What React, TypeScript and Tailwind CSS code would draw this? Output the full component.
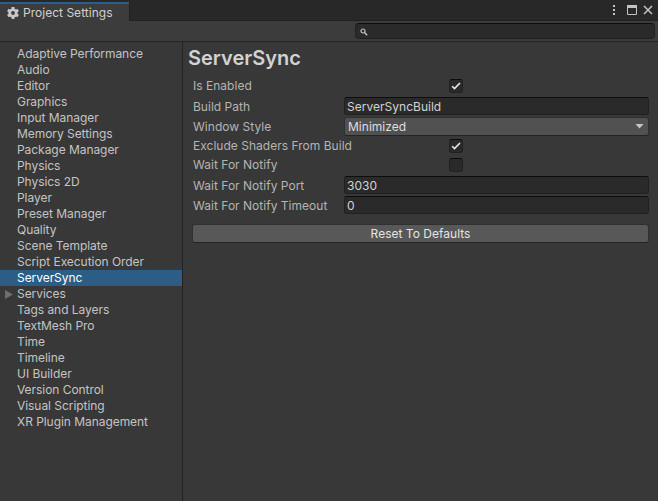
import React from "react";

const sections = [
  "Adaptive Performance", "Audio", "Editor", "Graphics", "Input Manager", "Memory Settings",
  "Package Manager", "Physics", "Physics 2D", "Player", "Preset Manager", "Quality",
  "Scene Template", "Script Execution Order", "ServerSync", "Services", "Tags and Layers",
  "TextMesh Pro", "Time", "Timeline", "UI Builder", "Version Control", "Visual Scripting",
  "XR Plugin Management",
];

function Gear() {
  return (
    <svg width="12" height="12" viewBox="0 0 12 12" className="shrink-0">
      <g fill="#c8c8c8">
        {[0, 60, 120].map((a) => (
          <rect key={a} x="4.5" y="0" width="3" height="12" rx="0.4" transform={`rotate(${a} 6 6)`} />
        ))}
        <circle cx="6" cy="6" r="4.6" />
      </g>
      <circle cx="6" cy="6" r="1.9" fill="#3c3c3c" />
    </svg>
  );
}

function Checkbox({ checked }: { checked?: boolean }) {
  return (
    <div className="ml-[105px] h-[14px] w-[14px] rounded-[3px] border border-[#212121] border-t-[#0d0d0d] bg-[#2a2a2a]">
      {checked && (
        <svg width="12" height="12" viewBox="0 0 12 12" className="block">
          <path d="M2.2 6.2 L4.5 8.6 L10 3" fill="none" stroke="#e8e8e8" strokeWidth="1.6" />
        </svg>
      )}
    </div>
  );
}

function TextField({ value }: { value: string }) {
  return (
    <div className="flex h-[18px] flex-1 items-center rounded-[3px] border border-[#212121] border-t-[#0d0d0d] bg-[#2a2a2a] pt-[2px] pl-[2px] text-[#d2d2d2]">
      {value}
    </div>
  );
}

function Row({ label, className, low, children }: { label: string; className: string; low?: boolean; children: React.ReactNode }) {
  return (
    <div className={`flex items-center ${className}`}>
      <div className={`w-[151px] shrink-0 whitespace-nowrap text-[#b4b4b4] ${low ? "pt-[2px]" : ""}`}>{label}</div>
      {children}
    </div>
  );
}

export default function App() {
  return (
    <div className="flex h-[501px] w-[658px] flex-col overflow-hidden bg-[#383838] font-[Inter,sans-serif] text-[12px] leading-[16px] tracking-[0.02px] text-[#c4c4c4]">
      <div className="flex h-[21px] shrink-0 bg-[#282828] pt-[2px]">
        <div className="flex w-[129px] items-center gap-1 border-t-2 border-[#2c5d87] bg-[#3c3c3c] pl-[7px] whitespace-nowrap">
          <Gear />
          <span className="text-[#d0d0d0]">Project Settings</span>
        </div>
        <div className="flex flex-1 justify-end border-b border-l border-[#212121] pr-[4px]">
          <svg width="42" height="16" viewBox="0 0 42 16" fill="none">
            <path d="M1 3h2v2H1zM1 7h2v2H1zM1 11h2v2H1z" fill="#c4c4c4" />
            <path d="M15.5 4v8.5h9V4" stroke="#c4c4c4" />
            <path d="M15 3h10v3H15z" fill="#c4c4c4" />
            <path d="M32 4l8 8M40 4l-8 8" stroke="#c4c4c4" strokeWidth="1.5" />
          </svg>
        </div>
      </div>
      <div className="flex h-[21px] shrink-0 justify-end border-b border-[#232323] bg-[#3c3c3c] pt-[2px] pr-[3px]">
        <div className="flex h-4 w-[300px] items-center rounded-[4px] border border-[#212121] border-t-[#0d0d0d] bg-[#2a2a2a] pt-px pl-1">
          <svg width="8" height="8" viewBox="0 0 8 8" fill="none" stroke="#c4c4c4">
            <circle cx="3" cy="3" r="2" strokeWidth="1.2" />
            <path d="M4.5 4.5L7.2 7.2" strokeWidth="1.4" />
          </svg>
        </div>
      </div>
      <div className="flex min-h-0 flex-1">
        <div className="w-[183px] shrink-0 border-r border-[#232323] pt-1 tracking-[-0.05px]">
          {sections.map((t) => (
            <div
              key={t}
              className={`flex h-4 items-center whitespace-nowrap ${t === "ServerSync" ? "bg-[#2c5d87] text-white" : ""}`}
            >
              <div className="w-[17px] shrink-0 pl-[5px]">
                {t === "Services" && (
                  <svg width="8" height="9" viewBox="0 0 8 9" className="block">
                    <path d="M0 0L8 4.5L0 9Z" fill="#6e6e6e" />
                  </svg>
                )}
              </div>
              {t}
            </div>
          ))}
        </div>
        <div className="flex min-w-0 flex-1 flex-col pr-[9px] pl-[10px]">
          <div className="-ml-[5px] h-[35px] pt-1 text-[20px] leading-[25px] font-semibold tracking-[0px] text-[#d2d2d2]">ServerSync</div>
          <Row label="Is Enabled" className="h-[18px]"><Checkbox checked /></Row>
          <Row label="Build Path" low className="mt-[2px] h-[18px]"><TextField value="ServerSyncBuild" /></Row>
          <Row label="Window Style" className="mt-[2px] h-[19px]">
            <div className="flex h-[19px] flex-1 items-center justify-between rounded-[3px] border border-[#303030] border-b-[#242424] bg-[#515151] pr-1 pl-[3px] text-[#dedede]">
              Minimized
              <svg width="9" height="5" viewBox="0 0 9 5"><path d="M0.5 0H8.5L4.5 4.5Z" fill="#c4c4c4" /></svg>
            </div>
          </Row>
          <Row label="Exclude Shaders From Build" className="mt-[1px] h-[18px]"><Checkbox checked /></Row>
          <Row label="Wait For Notify" className="mt-[1px] h-[18px]"><Checkbox /></Row>
          <Row label="Wait For Notify Port" low className="mt-[2px] h-[18px]"><TextField value="3030" /></Row>
          <Row label="Wait For Notify Timeout" low className="mt-[2px] h-[18px]"><TextField value="0" /></Row>
          <div className="mt-[10px] -ml-px flex h-[19px] items-center justify-center rounded-[3px] border border-[#303030] border-b-[#242424] bg-[#585858] text-[#e4e4e4]">
            Reset To Defaults
          </div>
        </div>
      </div>
    </div>
  );
}
